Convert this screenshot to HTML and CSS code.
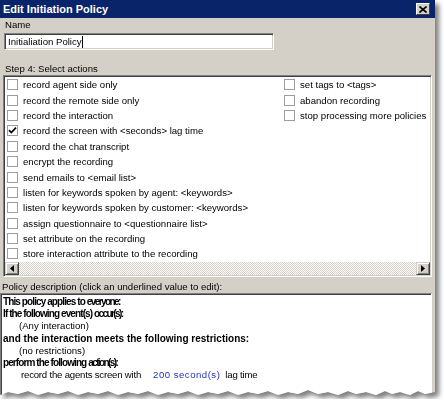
FILE: index.html
```html
<!DOCTYPE html>
<html>
<head>
<meta charset="utf-8">
<link rel="stylesheet" href="styles.css">
</head>
<body>
<div class="shadow">
  <div class="window">
    <div class="titlebar">
      <span class="title">Edit Initiation Policy</span>
      <span class="close"><svg width="8" height="7" viewBox="0 0 8 7"><path d="M0.5 0.5 L7.5 6.5 M7.5 0.5 L0.5 6.5" stroke="#000" stroke-width="1.6"/></svg></span>
    </div>
    <div class="label name-label">Name</div>
    <div class="input"><span>Initialiation Policy</span><span class="caret"></span></div>
    <div class="label step-label">Step 4: Select actions</div>
    <div class="list">
      <div class="list-body">
        <div class="col">
          <div class="row"><span class="cb"></span>record agent side only</div>
          <div class="row"><span class="cb"></span>record the remote side only</div>
          <div class="row"><span class="cb"></span>record the interaction</div>
          <div class="row"><span class="cb"><svg width="9" height="9" viewBox="0 0 9 9"><path d="M1 4.2 L3.3 6.6 L8 1.6" fill="none" stroke="#000" stroke-width="1.7"/></svg></span>record the screen with &lt;seconds&gt; lag time</div>
          <div class="row"><span class="cb"></span>record the chat transcript</div>
          <div class="row"><span class="cb"></span>encrypt the recording</div>
          <div class="row"><span class="cb"></span>send emails to &lt;email list&gt;</div>
          <div class="row"><span class="cb"></span>listen for keywords spoken by agent: &lt;keywords&gt;</div>
          <div class="row"><span class="cb"></span>listen for keywords spoken by customer: &lt;keywords&gt;</div>
          <div class="row"><span class="cb"></span>assign questionnaire to &lt;questionnaire list&gt;</div>
          <div class="row"><span class="cb"></span>set attribute on the recording</div>
          <div class="row"><span class="cb"></span>store interaction attribute to the recording</div>
        </div>
        <div class="col">
          <div class="row"><span class="cb"></span>set tags to &lt;tags&gt;</div>
          <div class="row"><span class="cb"></span>abandon recording</div>
          <div class="row"><span class="cb"></span>stop processing more policies</div>
        </div>
      </div>
      <div class="hscroll">
        <span class="sbtn"><svg width="4" height="7" viewBox="0 0 4 7"><path d="M4 0 L0 3.5 L4 7 Z" fill="#000"/></svg></span>
        <span class="track"></span>
        <span class="sbtn"><svg width="4" height="7" viewBox="0 0 4 7"><path d="M0 0 L4 3.5 L0 7 Z" fill="#000"/></svg></span>
      </div>
    </div>
    <div class="label desc-label">Policy description (click an underlined value to edit):</div>
    <div class="desc">
      <div class="line b tight">This policy applies to <span class="squash">everyone:</span></div>
      <div class="line b tight">If the following event(s) <span class="squash">occur(s):</span></div>
      <div class="line ind">(Any interaction)</div>
      <div class="line b">and the interaction meets the following restrictions:</div>
      <div class="line ind">(no restrictions)</div>
      <div class="line b tight">perform the following <span class="squash">action(s):</span></div>
      <div class="line ind act"><span class="txt">record the agents screen with</span><span class="val">200 second(s)</span><span class="txt">lag time</span></div>
    </div>
  </div>
</div>
</body>
</html>
```

FILE: styles.css
```css
html, body {
  margin: 0;
  padding: 0;
  background: #fff;
}
body {
  font-family: "Liberation Sans", Arial, sans-serif;
  font-size: 9.6px;
  color: #000;
}
.shadow {
  width: 435px;
  filter: drop-shadow(4px 4px 2.5px rgba(0, 0, 0, 0.5));
}
.window {
  width: 435px;
  height: 399px;
  background: #d4d0c8;
  display: flex;
  flex-direction: column;
  clip-path: polygon(0 0, 435px 0, 435px 392px, 425px 394px, 418px 391px, 410px 395px, 400px 392px, 392px 394px, 385px 391px, 376px 395px, 366px 392px, 356px 394px, 348px 391px, 338px 395px, 328px 392px, 318px 394px, 308px 390px, 298px 394px, 288px 392px, 278px 395px, 268px 391px, 258px 394px, 248px 392px, 238px 395px, 228px 391px, 218px 394px, 208px 392px, 198px 395px, 188px 391px, 178px 394px, 168px 392px, 158px 395px, 148px 391px, 138px 394px, 128px 392px, 118px 395px, 108px 391px, 98px 394px, 88px 392px, 78px 395px, 68px 391px, 58px 394px, 48px 392px, 38px 395px, 28px 391px, 18px 394px, 8px 392px, 0 395px);
}
.titlebar {
  height: 18px;
  flex: none;
  background: #0a246a;
  display: flex;
  align-items: center;
  justify-content: space-between;
  padding: 0 5px 0 3px;
}
.title {
  color: #fff;
  font-weight: bold;
  font-size: 11px;
}
.close {
  width: 14px;
  height: 12px;
  box-sizing: border-box;
  background: #d4d0c8;
  border-top: 1px solid #fff;
  border-left: 1px solid #fff;
  border-right: 1px solid #404040;
  border-bottom: 1px solid #404040;
  display: flex;
  align-items: center;
  justify-content: center;
}
.label {
  height: 12px;
  line-height: 12px;
  flex: none;
  padding-left: 5px;
}
.name-label {
  margin-top: 1px;
}
.input {
  margin: 2px 0 0 4px;
  width: 270px;
  height: 17px;
  box-sizing: border-box;
  flex: none;
  background: #fff;
  border-top: 1px solid #808080;
  border-left: 1px solid #808080;
  border-right: 1px solid #fff;
  border-bottom: 1px solid #fff;
  box-shadow: inset 1px 1px 0 #404040, inset -1px -1px 0 #d4d0c8;
  display: flex;
  align-items: center;
  padding-left: 3px;
}
.caret {
  width: 1px;
  height: 12px;
  background: #000;
}
.step-label {
  margin-top: 13px;
}
.list {
  margin: 0 3px 0 3px;
  height: 202px;
  box-sizing: border-box;
  flex: none;
  background: #fff;
  border-top: 1px solid #808080;
  border-left: 1px solid #808080;
  border-right: 1px solid #fff;
  border-bottom: 1px solid #fff;
  box-shadow: inset 1px 1px 0 #404040, inset -1px -1px 0 #d4d0c8;
  padding: 1px;
  display: flex;
  flex-direction: column;
}
.list-body {
  flex: 1;
  display: grid;
  grid-template-columns: 277px 1fr;
  padding-left: 2px;
}
.col {
  display: flex;
  flex-direction: column;
}
.row {
  height: 15.4px;
  display: flex;
  align-items: center;
  white-space: nowrap;
}
.cb {
  width: 11px;
  height: 11px;
  box-sizing: border-box;
  border: 1px solid #9d9d9d;
  background: #fff;
  margin-right: 5px;
  display: flex;
  align-items: center;
  justify-content: center;
  flex: none;
}
.hscroll {
  height: 13px;
  display: flex;
  flex: none;
}
.sbtn {
  width: 14px;
  height: 13px;
  box-sizing: border-box;
  background: #d4d0c8;
  border-top: 1px solid #d4d0c8;
  border-left: 1px solid #d4d0c8;
  border-right: 1px solid #404040;
  border-bottom: 1px solid #404040;
  box-shadow: inset 1px 1px 0 #fff, inset -1px -1px 0 #808080;
  display: flex;
  align-items: center;
  justify-content: center;
  flex: none;
}
.track {
  flex: 1;
  background: repeating-conic-gradient(#d4d0c8 0 25%, #fff 0 50%) 0 0 / 2px 2px;
}
.desc-label {
  margin-top: 4px;
  padding-left: 2px;
}
.desc {
  flex: 1;
  margin: 0 3px 0 0;
  background: #fff;
  border-top: 1px solid #808080;
  border-left: 1px solid #808080;
  border-right: 1px solid #fff;
  box-shadow: inset 1px 1px 0 #404040;
  padding: 2px 0 0 2px;
}
.line {
  height: 12.2px;
  line-height: 12.2px;
  white-space: nowrap;
}
.b {
  font-weight: bold;
  font-size: 10px;
  letter-spacing: 0;
}
.tight {
  letter-spacing: -0.9px;
}
.squash {
  letter-spacing: -1.6px;
}
.ind {
  padding-left: 16px;
}
.act {
  padding-left: 18px;
  display: flex;
}
.txt {
  letter-spacing: -0.2px;
}
.val {
  color: #2233bb;
  letter-spacing: 0.5px;
  margin: 0 5px 0 12px;
}
```
